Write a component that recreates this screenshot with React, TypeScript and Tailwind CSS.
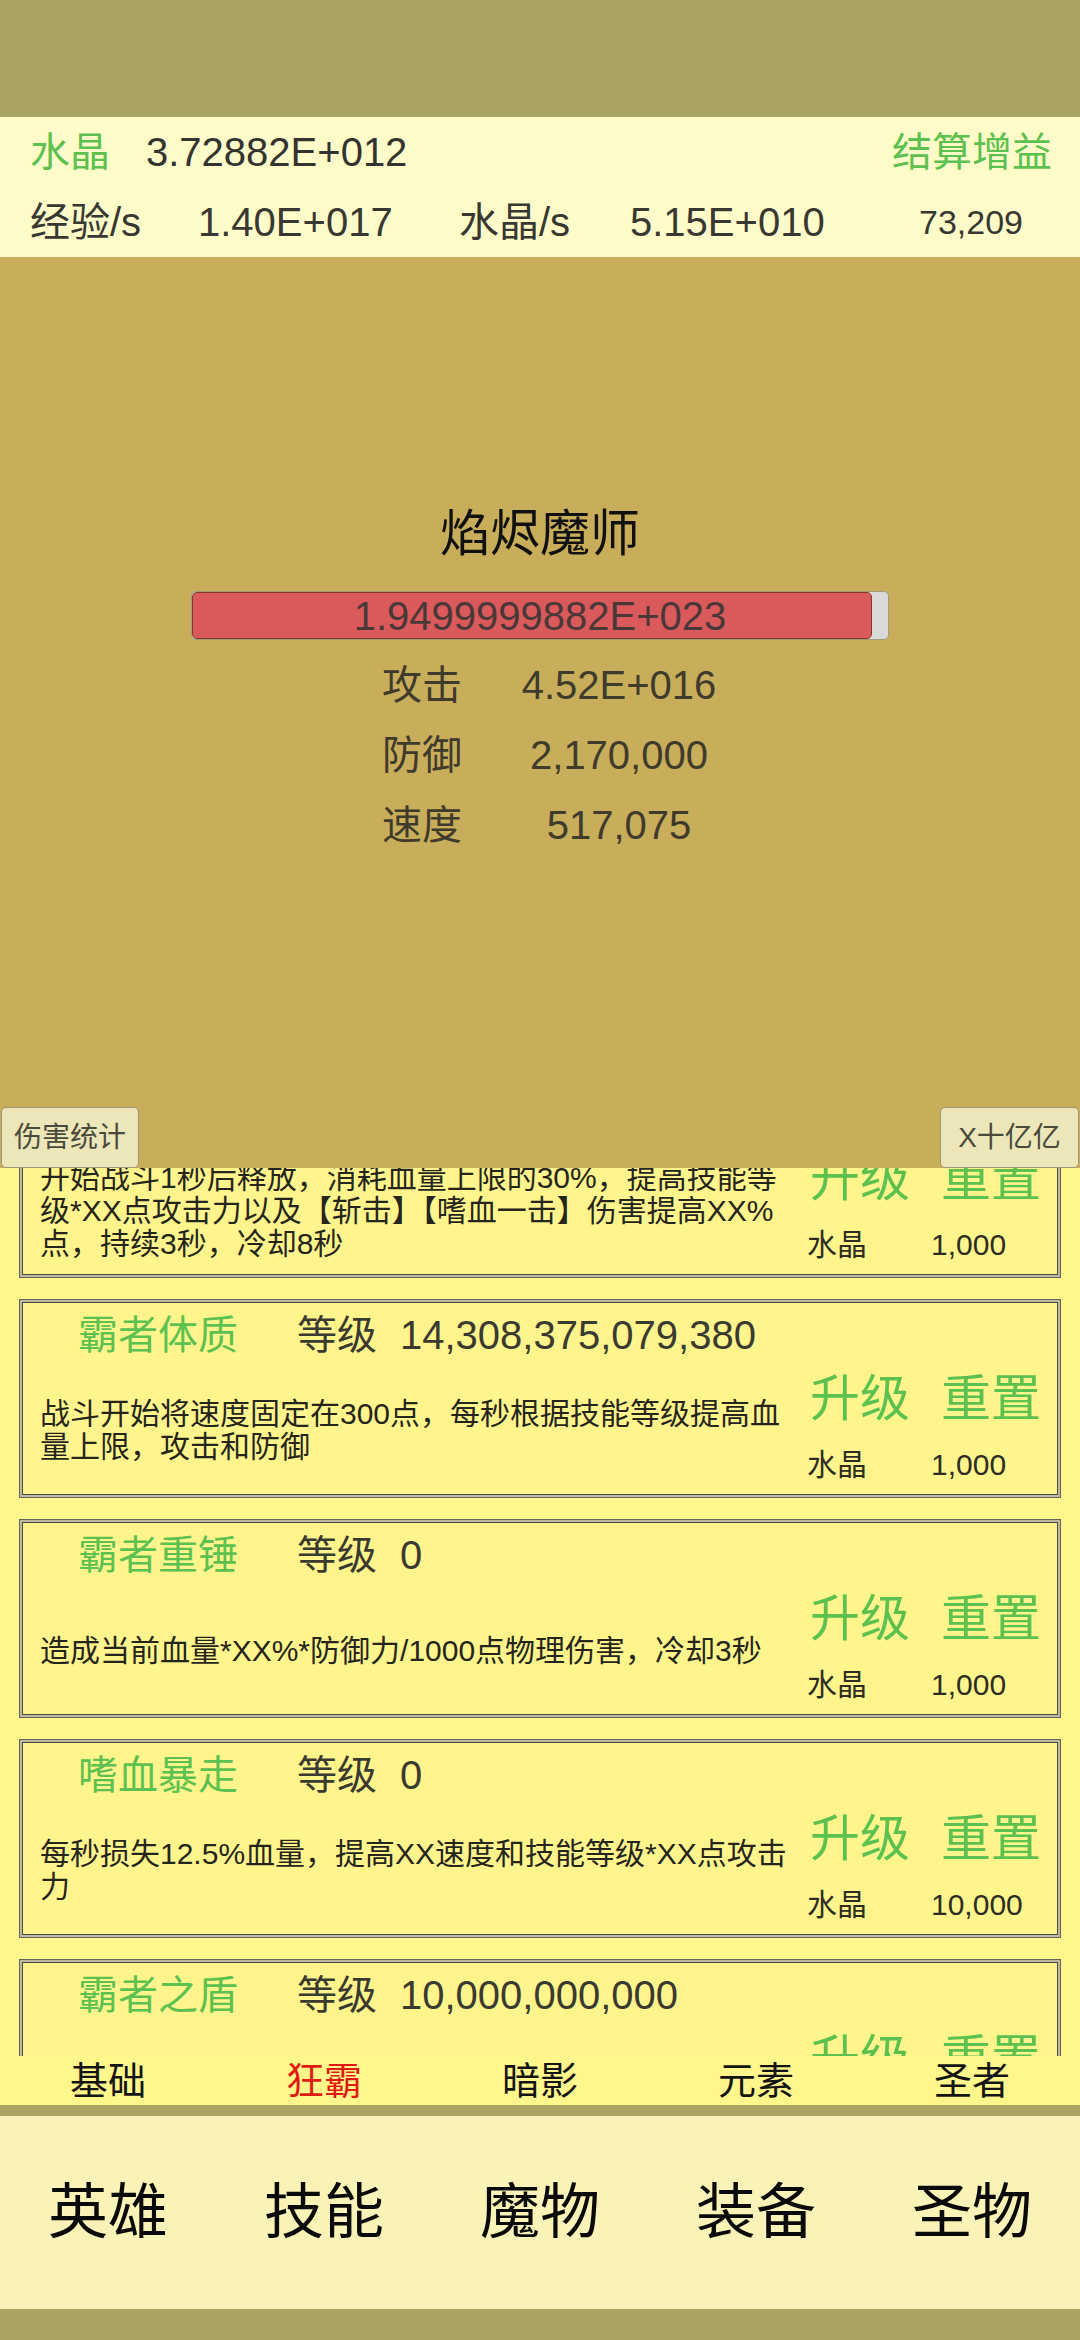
import React from 'react';

type Skill = {
  name: string;
  level: string;
  desc: string;
  cost: string;
};

const skills: Skill[] = [
  {
    name: '霸者之怒',
    level: '0',
    desc: '开始战斗1秒后释放，消耗血量上限的30%，提高技能等级*XX点攻击力以及【斩击】【嗜血一击】伤害提高XX%点，持续3秒，冷却8秒',
    cost: '1,000',
  },
  {
    name: '霸者体质',
    level: '14,308,375,079,380',
    desc: '战斗开始将速度固定在300点，每秒根据技能等级提高血量上限，攻击和防御',
    cost: '1,000',
  },
  {
    name: '霸者重锤',
    level: '0',
    desc: '造成当前血量*XX%*防御力/1000点物理伤害，冷却3秒',
    cost: '1,000',
  },
  {
    name: '嗜血暴走',
    level: '0',
    desc: '每秒损失12.5%血量，提高XX速度和技能等级*XX点攻击力',
    cost: '10,000',
  },
  {
    name: '霸者之盾',
    level: '10,000,000,000',
    desc: '受到伤害时根据技能等级减少XX点伤害',
    cost: '100,000',
  },
];

const stats = [
  { label: '攻击', value: '4.52E+016' },
  { label: '防御', value: '2,170,000' },
  { label: '速度', value: '517,075' },
];

const subTabs = ['基础', '狂霸', '暗影', '元素', '圣者'];
const mainTabs = ['英雄', '技能', '魔物', '装备', '圣物'];

const SkillCard: React.FC<{ skill: Skill }> = ({ skill }) => (
  <div className="h-[199px] shrink-0 border border-[#66665e] bg-[#bdb9a2] p-[2px]">
    <div className="flex h-full border border-[#4a4a42] bg-[#fff58c]">
      <div className="flex w-[783px] flex-col">
        <div className="flex h-[63px] items-center pl-[55px] text-[40px] leading-[48px]">
          <span className="w-[219px] text-[#5dc14f]">{skill.name}</span>
          <span className="text-[#3b3a30]">等级</span>
          <span className="ml-[23px] text-[#3b3a30]">{skill.level}</span>
        </div>
        <div className="flex flex-1 items-center pl-[17px]">
          <p className="w-[760px] text-[30px] leading-[33px] text-[#26251c]">{skill.desc}</p>
        </div>
      </div>
      <div className="flex flex-1 flex-col pt-[66px]">
        <div className="flex pl-[4px] text-[50px] leading-[60px] text-[#5dc14f]">
          <span>升级</span>
          <span className="ml-[31px]">重置</span>
        </div>
        <div className="mt-[18px] flex pl-[1px] text-[30px] leading-[36px] text-[#2e2d24]">
          <span className="w-[124px]">水晶</span>
          <span>{skill.cost}</span>
        </div>
      </div>
    </div>
  </div>
);

export default function App() {
  return (
    <div className="flex h-[2340px] w-[1080px] flex-col overflow-hidden bg-[#a9a462] font-['Liberation_Sans','Noto_Sans_CJK_SC',sans-serif]">
      {/* top bar */}
      <div className="h-[117px] shrink-0 bg-[#a9a462]" />

      {/* resources */}
      <div className="h-[140px] shrink-0 bg-[#fffcc9] text-[40px] leading-[48px]">
        <div className="flex h-[70px] items-center pl-[30px] pr-[28px]">
          <span className="w-[116px] text-[#5dc14f]">水晶</span>
          <span className="text-[#333330]">3.72882E+012</span>
          <span className="ml-auto text-[#5dc14f]">结算增益</span>
        </div>
        <div className="flex h-[70px] items-center pl-[30px] text-[#383833]">
          <span className="w-[168px]">经验/s</span>
          <span className="w-[261px]">1.40E+017</span>
          <span className="w-[171px]">水晶/s</span>
          <span className="w-[240px]">5.15E+010</span>
          <span className="w-[202px] text-center text-[34px]">73,209</span>
        </div>
      </div>

      {/* battle area */}
      <div className="flex h-[911px] shrink-0 flex-col bg-[#c8ae5a] pt-[247px]">
        <div className="text-center text-[50px] leading-[60px] text-[#111]">焰烬魔师</div>
        <div className="relative mx-auto mt-[27px] h-[49px] w-[698px] rounded-[5px] border border-[#a39a78] bg-[#d9d9d9]">
          <div className="h-full w-[680px] rounded-[5px] border border-[#86391f] bg-[#da5a5c]" />
          <div className="absolute inset-0 flex items-center justify-center text-[40px] leading-[48px] text-[#4a3838]">
            1.9499999882E+023
          </div>
        </div>
        <div className="mt-[10px] flex flex-col">
          {stats.map((s) => (
            <div key={s.label} className="flex h-[70px] items-center pl-[382px] text-[40px] leading-[48px] text-[#3f3b2c]">
              <span className="w-[102px]">{s.label}</span>
              <span className="w-[270px] text-center">{s.value}</span>
            </div>
          ))}
        </div>
        <div className="mt-auto flex justify-between px-[1px]">
          <button className="h-[61px] w-[138px] rounded-[5px] border border-[#9d9678] bg-[#ece6b8] text-[28px] text-[#4a4a3c]">
            伤害统计
          </button>
          <button className="h-[61px] w-[139px] rounded-[5px] border border-[#9d9678] bg-[#ece6b8] text-[28px] text-[#4a4a3c]">
            X十亿亿
          </button>
        </div>
      </div>

      {/* skill list */}
      <div className="h-[888px] shrink-0 overflow-hidden bg-[#fff68c]">
        <div className="mt-[-89px] flex flex-col gap-[21px] px-[19px]">
          {skills.map((s) => (
            <SkillCard key={s.name} skill={s} />
          ))}
        </div>
      </div>

      {/* sub tabs */}
      <div className="grid h-[49px] shrink-0 grid-cols-5 bg-[#fff68c] text-[38px] leading-[46px]">
        {subTabs.map((t) => (
          <div key={t} className={`flex items-center justify-center ${t === '狂霸' ? 'text-[#e01a12]' : 'text-[#141414]'}`}>
            {t}
          </div>
        ))}
      </div>

      <div className="h-[11px] shrink-0 bg-[#a9a462]" />

      {/* main nav */}
      <div className="grid h-[193px] shrink-0 grid-cols-5 bg-[#f9f3b7] text-[60px] leading-[72px] text-[#0a0a0a]">
        {mainTabs.map((t) => (
          <div key={t} className="flex items-center justify-center">
            {t}
          </div>
        ))}
      </div>

      <div className="h-[31px] shrink-0 bg-[#a9a462]" />
    </div>
  );
}
